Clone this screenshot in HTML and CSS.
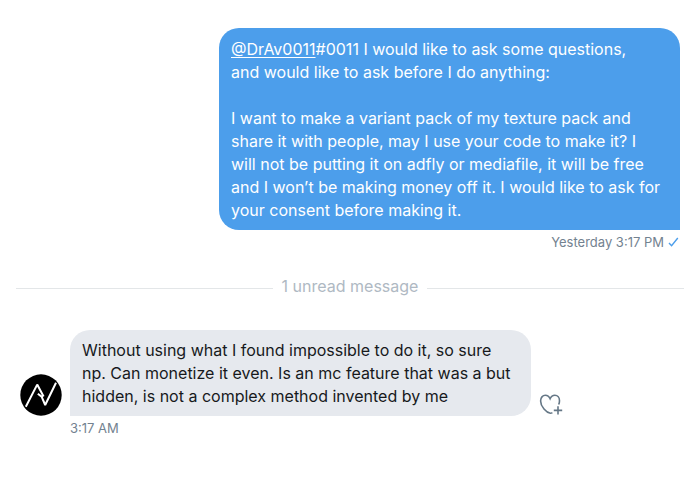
FILE: index.html
```html
<!DOCTYPE html>
<html lang="en">
<head>
<meta charset="utf-8">
<meta name="viewport" content="width=device-width, initial-scale=1">
<title>Messages</title>
<link rel="stylesheet" href="styles.css">
</head>
<body>
<main class="chat">
  <article class="sent">
    <div class="bubble bubble-sent">
      <p><a class="mention" href="#">@DrAv0011</a>#0011 I would like to ask some questions,<br>and would like to ask before I do anything:</p>
      <p>I want to make a variant pack of my texture pack and<br>share it with people, may I use your code to make it? I<br>will not be putting it on adfly or mediafile, it will be free<br>and I won’t be making money off it. I would like to ask for<br>your consent before making it.</p>
    </div>
    <div class="meta meta-sent">
      <time>Yesterday 3:17 PM</time>
      <svg class="check" viewBox="0 0 11 10" aria-hidden="true"><path d="M1 6 3.6 8.8 9.8 1"/></svg>
    </div>
  </article>
  <div class="divider"><span>1 unread message</span></div>
  <article class="received">
    <svg class="avatar" viewBox="0 0 42 42" aria-hidden="true">
      <circle cx="21" cy="21" r="20.7"/>
      <path d="M5.8 32.8 17.2 10.6 23.6 22.4M17.8 19.8 21.6 22.6 25.2 31 36 8.8"/>
    </svg>
    <div class="bubble bubble-received">
      <p>Without using what I found impossible to do it, so sure<br>np. Can monetize it even. Is an mc feature that was a but<br>hidden, is not a complex method invented by me</p>
    </div>
    <button class="react" type="button" aria-label="Add reaction">
      <svg viewBox="0 0 24 22" aria-hidden="true"><path d="M13.4 18.6c-.6.4-1.2.7-2 .7C7.4 18.8 1.6 12.6 1.6 6.9 1.6 3.6 3.7 1.3 6.3 1.3c2.3 0 3.9 1.4 4.8 3.5.9-2.1 2.5-3.5 4.8-3.5 2.7 0 4.6 2.3 4.6 5.4 0 1.4-.3 2.6-.8 3.8M19 12.2v8.4M14.8 16.4h8.4"/></svg>
    </button>
    <div class="meta meta-received"><time>3:17 AM</time></div>
  </article>
</main>
</body>
</html>
```
FILE: styles.css
```css
* { box-sizing: border-box; }
body {
  margin: 0;
  background: #fff;
  font-family: Inter, "Liberation Sans", sans-serif;
}
p { margin: 0; }
p + p { margin-top: 23px; }
.chat { padding: 28px 20px; }
.sent {
  display: flex;
  flex-direction: column;
  align-items: flex-end;
}
.bubble {
  font-size: 16px;
  line-height: 23px;
}
.bubble-sent {
  width: calc(70% - 1px);
  padding: 10px 12px 8px;
  border-radius: 20px 20px 0 20px;
  background: #4c9eeb;
  color: #fff;
}
.mention {
  color: inherit;
  text-decoration: underline;
  text-underline-offset: 2px;
}
.meta {
  font-size: 13px;
  line-height: 16px;
  color: #738290;
}
.meta-sent {
  display: flex;
  align-items: center;
  gap: 4px;
  margin-top: 4px;
  padding-right: 1px;
}
.check {
  width: 11px;
  height: 10px;
  fill: none;
  stroke: #4c9eeb;
  stroke-width: 1.4;
}
.divider {
  display: flex;
  align-items: center;
  gap: 9px;
  margin: 24px -4px 32px;
  font-size: 16px;
  line-height: 24px;
  color: #afb9c3;
}
.divider::before,
.divider::after {
  content: "";
  flex: 1;
  height: 1px;
  margin-top: 4px;
  background: #e3e6e8;
}
.received {
  display: grid;
  grid-template-columns: 42px calc(70% - 1px) 24px;
  column-gap: 8px;
  align-items: end;
}
.avatar {
  width: 42px;
  height: 42px;
  fill: #000;
}
.avatar path {
  fill: none;
  stroke: #fff;
  stroke-width: 2;
  stroke-linejoin: bevel;
}
.bubble-received {
  padding: 9px 12px 8px;
  border-radius: 20px 20px 20px 0;
  background: #e6e9ee;
  color: #17191c;
}
.react {
  width: 24px;
  height: 22px;
  padding: 0;
  border: 0;
  background: none;
}
.react svg {
  display: block;
  fill: none;
  stroke: #657786;
  stroke-width: 1.6;
}
.meta-received {
  grid-column: 2;
  margin-top: 4px;
}
```
